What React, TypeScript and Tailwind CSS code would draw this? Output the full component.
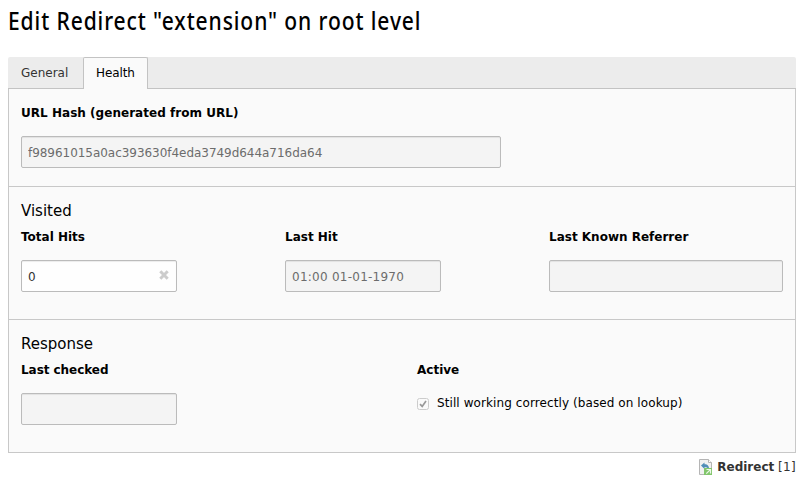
import type { ReactNode } from 'react';

function Label({ children, className = '' }: { children: ReactNode; className?: string }) {
  return <div className={`h-4 whitespace-nowrap text-xs leading-4 font-bold text-black ${className}`}>{children}</div>;
}

function Field({ value = '', className = '', disabled = true }: { value?: string; className?: string; disabled?: boolean }) {
  return (
    <input
      readOnly
      disabled={disabled}
      value={value}
      className={`block h-8 rounded-[2px] border border-[#bbb] px-1.5 pt-0.5 text-xs shadow-[inset_0_1px_1px_rgba(0,0,0,0.075)] ${
        disabled ? 'bg-[#f4f4f4] text-[#6c6c6c]' : 'bg-[#fefefe] text-[#333]'
      } ${className}`}
    />
  );
}

function RecordIcon() {
  return (
    <svg className="h-4 w-4 shrink-0" viewBox="0 0 16 16">
      <path d="M1.500 .5h9l3 3v12h-12z" fill="#f1f1f1" stroke="#b5b5b5" />
      <path d="M10.500 .5v3h3" fill="#fff" stroke="#b5b5b5" />
      <path d="M3 6.500l3.500-3v1.700c3.200 0 5 2 4.300 5.300-.8-1.700-2-2.300-4.300-2.300V10z" fill="#4f8db8" />
      <rect x="6" y="9" width="8" height="7" fill="#82c66c" />
      <path d="M8.500 10.500h4v4M12.300 10.700l-4 4" fill="none" stroke="#edf8e9" strokeWidth="1.200" />
    </svg>
  );
}

export default function App() {
  return (
    <div className="h-[483px] w-[804px] overflow-hidden bg-white px-2 font-['DejaVu_Sans',Verdana,sans-serif] text-xs text-black">
      <div className="flex h-[57px] pt-1">
        <h1 className="h-8 origin-left scale-x-[0.81] font-['Noto_Sans',sans-serif] text-[26px] leading-8 font-medium tracking-[1.1px] whitespace-nowrap">
          Edit Redirect "extension" on root level
        </h1>
      </div>
      <div className="flex h-8 rounded-t-[2px] border-b border-[#c3c3c3] bg-[#ececec]">
        <div className="w-[75px] pl-[13px] leading-[32px] text-[#333]">General</div>
        <div className="-mb-px h-8 w-[65px] rounded-t-[2px] border border-b-0 border-[#c3c3c3] bg-[#fafafa] pl-3 leading-[30px] tracking-[-0.1px]">
          Health
        </div>
      </div>
      <div className="border border-t-0 border-[#c8c8c8] bg-[#fafafa]">
        <section className="h-[98px] border-b border-[#c8c8c8] px-3 pt-4">
          <Label className="tracking-[0.03px]">URL Hash (generated from URL)</Label>
          <Field value="f98961015a0ac393630f4eda3749d644a716da64" className="mt-[15px] w-[480px] tracking-[-0.04px]" />
        </section>
        <section className="h-[133px] border-b border-[#c8c8c8] px-3 pt-[15px]">
          <h2 className="h-[19px] text-[15px] leading-[19px]">Visited</h2>
          <div className="mt-2 flex">
            <div className="w-[264px]">
              <Label>Total Hits</Label>
              <div className="relative mt-[15px] w-[156px]">
                <Field value="0" disabled={false} className="w-full" />
                <svg className="absolute top-[10px] right-[8px] h-[10px] w-[10px]" viewBox="0 0 10 10">
                  <path d="M1.300 1.300l7.400 7.400M8.700 1.300l-7.400 7.400" stroke="#ccc" strokeWidth="3" />
                </svg>
              </div>
            </div>
            <div className="w-[264px]">
              <Label>Last Hit</Label>
              <Field value="01:00 01-01-1970" className="mt-[15px] w-[156px] tracking-[0.25px]" />
            </div>
            <div className="w-[234px]">
              <Label>Last Known Referrer</Label>
              <Field className="mt-[15px] w-full" />
            </div>
          </div>
        </section>
        <section className="h-[132px] px-3 pt-[15px]">
          <h2 className="h-[19px] text-[15px] leading-[19px]">Response</h2>
          <div className="mt-2 flex">
            <div className="w-[396px]">
              <Label className="tracking-[-0.05px]">Last checked</Label>
              <Field className="mt-[15px] w-[156px]" />
            </div>
            <div>
              <Label>Active</Label>
              <div className="mt-[17px] flex h-4">
                <svg className="mt-[3px] h-3 w-3" viewBox="0 0 12 12">
                  <rect x=".5" y=".5" width="11" height="11" rx="2" fill="#fafafa" stroke="#ccc" />
                  <path d="M3 6.200l2.200 2.200L9 3" fill="none" stroke="#999" strokeWidth="1.700" />
                </svg>
                <span className="ml-2 leading-4 tracking-[0.09px] whitespace-nowrap">Still working correctly (based on lookup)</span>
              </div>
            </div>
          </div>
        </section>
      </div>
      <div className="mt-1.5 flex h-4 justify-end leading-4 text-[#333]">
        <RecordIcon />
        <span className="ml-[3px] whitespace-nowrap"><b>Redirect</b> <span className="tracking-[0.3px]">[1]</span></span>
      </div>
    </div>
  );
}
